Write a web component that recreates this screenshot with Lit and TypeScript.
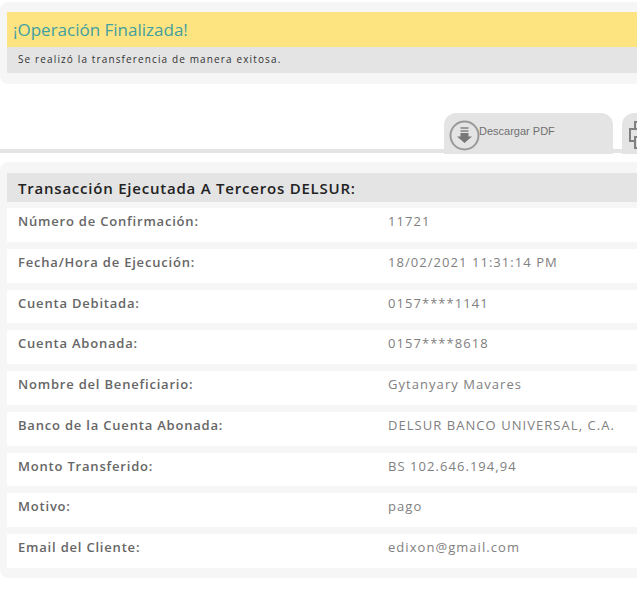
import { LitElement, html, css } from "lit";
import { customElement } from "lit/decorators.js";

const rows: [string, string][] = [
  ["Número de Confirmación:", "11721"],
  ["Fecha/Hora de Ejecución:", "18/02/2021 11:31:14 PM"],
  ["Cuenta Debitada:", "0157****1141"],
  ["Cuenta Abonada:", "0157****8618"],
  ["Nombre del Beneficiario:", "Gytanyary Mavares"],
  ["Banco de la Cuenta Abonada:", "DELSUR BANCO UNIVERSAL, C.A."],
  ["Monto Transferido:", "BS 102.646.194,94"],
  ["Motivo:", "pago"],
  ["Email del Cliente:", "edixon@gmail.com"],
];

@customElement("app-root")
export class AppRoot extends LitElement {
  static styles = css`
    :host {
      display: block;
      width: 637px;
      height: 600px;
      overflow: hidden;
      background: #fff;
      font-family: "Open Sans", sans-serif;
      padding-top: 2px;
      box-sizing: border-box;
    }
    .card {
      background: #f6f6f6;
      border-radius: 8px 0 0 8px;
      padding-left: 7px;
    }
    .top {
      height: 82px;
      padding-top: 10px;
      box-sizing: border-box;
    }
    .banner {
      background: #fee381;
      height: 35px;
      padding-left: 6px;
      font-size: 17px;
      line-height: 36px;
      color: #41a0a0;
      white-space: nowrap;
    }
    .msg {
      background: #e4e4e4;
      height: 26px;
      padding-left: 11px;
      font-size: 10px;
      line-height: 25px;
      letter-spacing: 1.13px;
      color: #333;
      white-space: nowrap;
    }
    .tabs {
      height: 78px;
      position: relative;
      box-sizing: border-box;
      display: flex;
      align-items: flex-end;
      padding-left: 444px;
      gap: 9px;
      overflow: hidden;
    }
    .tabs::before {
      content: "";
      position: absolute;
      left: 0;
      right: 0;
      top: 65px;
      height: 4px;
      background: #e4e4e4;
    }
    .tab {
      position: relative;
      flex: none;
      width: 169px;
      height: 41px;
      margin-bottom: 8px;
      background: #e4e4e4;
      border-radius: 12px 12px 0 0;
      display: flex;
      align-items: flex-start;
      font-family: "Liberation Sans", sans-serif;
      font-size: 11px;
      color: #707070;
      box-sizing: border-box;
    }
    .tab.second { width: 60px; }
    .tab svg { display: block; flex: none; }
    .tab .ic1 { margin: 7px -1px 0 5px; }
    .tab .ic2 { margin: 7px 0 0 7px; }
    .tab span { line-height: 36px; white-space: nowrap; }
    .main {
      height: 416px;
      padding-top: 11px;
      box-sizing: border-box;
    }
    .title {
      background: #e4e4e4;
      height: 29px;
      padding-left: 11px;
      font-size: 15px;
      font-weight: 600;
      line-height: 30px;
      letter-spacing: 0.78px;
      color: #222;
      white-space: nowrap;
    }
    .rows {
      display: flex;
      flex-direction: column;
      gap: 7px;
      margin-top: 6px;
    }
    .row {
      background: #fff;
      height: 33.75px;
      display: grid;
      grid-template-columns: 370px 1fr;
      padding-left: 11px;
      line-height: 27px;
      white-space: nowrap;
    }
    .k {
      font-size: 13px;
      font-weight: 600;
      letter-spacing: 0.8px;
      color: #666;
    }
    .v {
      font-size: 13px;
      letter-spacing: 1.05px;
      color: #808080;
    }
  `;

  render() {
    return html`
      <div class="card top">
        <div class="banner">¡Operación Finalizada!</div>
        <div class="msg">Se realizó la transferencia de manera exitosa.</div>
      </div>
      <div class="tabs">
        <div class="tab">
          <svg class="ic1" width="31" height="31" viewBox="0 0 31 31">
            <circle cx="15.500" cy="15.500" r="14" fill="none" stroke="#999" stroke-width="2" />
            <path d="M11.500 7h8v2h-8zM11.500 10h8v2h-8z" fill="#999" />
            <path d="M11.500 13h8v3.500h3.500L15.500 23 8 16.500h3.500z" fill="#777" />
          </svg>
          <span>Descargar PDF</span>
        </div>
        <div class="tab second">
          <svg class="ic2" width="30" height="30" viewBox="0 0 30 30">
            <path d="M6 9V2h12v7M6 21H1V9h22v12h-5M6 17h12v11H6z" fill="none" stroke="#808080" stroke-width="2" />
          </svg>
        </div>
      </div>
      <div class="card main">
        <div class="title">Transacción Ejecutada A Terceros DELSUR:</div>
        <div class="rows">
          ${rows.map(
            ([k, v]) => html`<div class="row"><div class="k">${k}</div><div class="v">${v}</div></div>`
          )}
        </div>
      </div>
    `;
  }
}
